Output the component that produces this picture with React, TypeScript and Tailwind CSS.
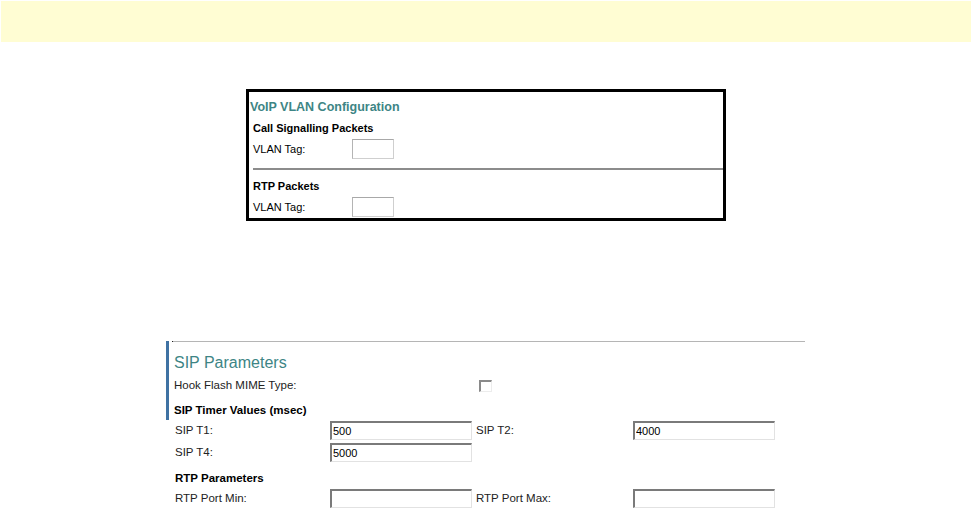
const inset =
    'h-[19px] border-t-2 border-l-2 border-t-[#7a7a7a] border-l-[#7a7a7a] border-b border-r border-b-[#e2e2e2] border-r-[#e2e2e2] bg-white px-[1px] text-[11px] leading-none text-black outline-none';

const vlanBox =
    'w-[42px] h-[20px] border border-[#cfcfcf] border-t-[#a8a8a8] border-l-[#b4b4b4] bg-white outline-none';

const VlanRow = () => (
    <div className="flex items-center h-[20px] mt-[4px] pl-[4px]">
        <span className="w-[99px] text-[11px] text-black">VLAN Tag:</span>
        <input readOnly className={vlanBox} />
    </div>
);

const SipRow = ({ a, av, b, bv }: { a: string; av?: string; b?: string; bv?: string }) => (
    <div className="flex items-center pl-[9px]">
        <span className="w-[155px] text-[11.5px] text-[#222]">{a}</span>
        <input readOnly defaultValue={av} className={`${inset} w-[142px]`} />
        {b && (
            <>
                <span className="w-[157px] ml-[4px] text-[11.5px] text-[#222]">{b}</span>
                <input readOnly defaultValue={bv} className={`${inset} w-[142px]`} />
            </>
        )}
    </div>
);

export default function App() {
    return (
        <div className="min-h-screen bg-white pt-[1px] font-['Liberation_Sans',Arial,sans-serif]">
            <div className="ml-[1px] mr-[2px] h-[41px] bg-[#fffdd3]" />

            {/* VoIP VLAN box */}
            <div className="ml-[246px] mt-[47px] w-[480px] h-[132px] border-[3px] border-black">
                <div className="pl-[1px] pt-[8px] text-[12.5px] leading-[14px] font-bold text-[#3d8585]">
                    VoIP VLAN Configuration
                </div>
                <div className="pl-[4px] mt-[7px] text-[11px] leading-[14px] font-bold text-black">
                    Call Signalling Packets
                </div>
                <VlanRow />
                <div className="ml-[4px] mt-[9px] h-[2px] bg-[#8c8c8c]" />
                <div className="pl-[4px] mt-[9px] text-[11px] leading-[14px] font-bold text-black">
                    RTP Packets
                </div>
                <VlanRow />
            </div>

            {/* SIP Parameters */}
            <div className="ml-[166px] mt-[120px] w-[639px]">
                <div className="flex">
                    <div className="w-[3px] bg-[#3f72a3]" />
                    <div className="flex-1 ml-[3px] pb-[3px]">
                        <div className="flex h-px">
                            <div className="w-px bg-[#222]" />
                            <div className="flex-1 bg-[#b5b5b5]" />
                        </div>
                        <div className="pl-[2px] mt-[11px] text-[16px] leading-[20px] text-[#3d8585]">
                            SIP Parameters
                        </div>
                        <div className="flex items-center mt-[6px] h-[14px] pl-[2px]">
                            <span className="w-[305px] text-[11.5px] text-[#222]">Hook Flash MIME Type:</span>
                            <input
                                type="checkbox"
                                readOnly
                                className="appearance-none w-[13px] h-[12px] border-t-2 border-l-2 border-t-[#8a8a8a] border-l-[#8a8a8a] border-b border-r border-b-[#ececec] border-r-[#ececec] bg-white"
                            />
                        </div>
                        <div className="pl-[2px] mt-[10px] text-[11.5px] leading-[14px] font-bold text-black">
                            SIP Timer Values (msec)
                        </div>
                    </div>
                </div>
                <div className="mt-[1px]">
                    <SipRow a="SIP T1:" av="500" b="SIP T2:" bv="4000" />
                </div>
                <div className="mt-[3px]">
                    <SipRow a="SIP T4:" av="5000" />
                </div>
                <div className="pl-[9px] mt-[9px] text-[11.5px] leading-[14px] font-bold text-black">
                    RTP Parameters
                </div>
                <div className="mt-[4px]">
                    <SipRow a="RTP Port Min:" av="" b="RTP Port Max:" bv="" />
                </div>
            </div>
        </div>
    );
}
